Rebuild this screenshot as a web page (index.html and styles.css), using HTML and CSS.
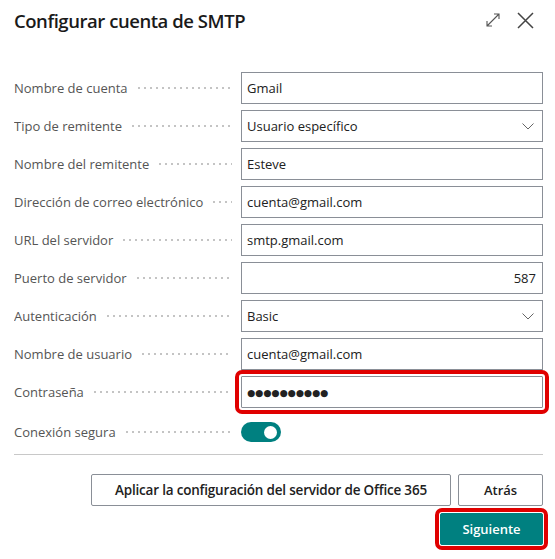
FILE: index.html
```html
<!DOCTYPE html>
<html lang="es">
<head>
<meta charset="utf-8">
<link rel="stylesheet" href="styles.css">
</head>
<body>
<div class="dialog">
  <header class="head">
    <h1 class="title">Configurar cuenta de SMTP</h1>
    <div class="head-icons">
      <svg class="icon" width="16" height="16" viewBox="0 0 16 16"><path d="M2 14 L14 2 M9 2 H14 V7 M2 9 V14 H7" fill="none" stroke="#555" stroke-width="1.1"/></svg>
      <svg class="icon close" width="17" height="17" viewBox="0 0 17 17"><path d="M1 1 L16 16 M16 1 L1 16" fill="none" stroke="#444" stroke-width="1.5"/></svg>
    </div>
  </header>

  <div class="form">
    <div class="row"><span class="label">Nombre de cuenta</span><div class="field">Gmail</div></div>
    <div class="row"><span class="label">Tipo de remitente</span><div class="field select">Usuario específico<svg class="chev" width="12" height="7" viewBox="0 0 12 7"><path d="M0.5 0.5 L6 6 L11.5 0.5" fill="none" stroke="#666" stroke-width="1"/></svg></div></div>
    <div class="row"><span class="label">Nombre del remitente</span><div class="field">Esteve</div></div>
    <div class="row"><span class="label">Dirección de correo electrónico</span><div class="field">cuenta@gmail.com</div></div>
    <div class="row"><span class="label">URL del servidor</span><div class="field">smtp.gmail.com</div></div>
    <div class="row"><span class="label">Puerto de servidor</span><div class="field num">587</div></div>
    <div class="row"><span class="label">Autenticación</span><div class="field select">Basic<svg class="chev" width="12" height="7" viewBox="0 0 12 7"><path d="M0.5 0.5 L6 6 L11.5 0.5" fill="none" stroke="#666" stroke-width="1"/></svg></div></div>
    <div class="row"><span class="label">Nombre de usuario</span><div class="field">cuenta@gmail.com</div></div>
    <div class="row"><span class="label">Contraseña</span><div class="field pw highlight">●●●●●●●●●●</div></div>
    <div class="row toggle-row"><span class="label">Conexión segura</span><div class="toggle"><span class="knob"></span></div></div>
  </div>

  <div class="divider"></div>

  <div class="actions">
    <div class="btn-line">
      <button class="btn apply">Aplicar la configuración del servidor de Office 365</button>
      <button class="btn back">Atrás</button>
    </div>
    <div class="btn-line">
      <button class="btn primary highlight">Siguiente</button>
    </div>
  </div>
</div>
</body>
</html>
```
FILE: styles.css
```css
* { box-sizing: border-box; }
html, body { margin: 0; background: #fff; }
body { font-family: "Open Sans", "Noto Sans", sans-serif; color: #212121; }

.dialog { width: 555px; height: 559px; padding: 0 12px 0 14px; }

.head { display: flex; align-items: center; justify-content: space-between; height: 38px; padding-top: 2px; }
.title { margin: 0; font-size: 18.5px; font-weight: 600; color: #1a1a1a; letter-spacing: -0.45px; }
.head-icons { display: flex; align-items: center; gap: 16px; padding-right: 9px; }
.icon { display: block; }

.form { display: flex; flex-direction: column; gap: 6px; margin-top: 34px; }
.row { display: grid; grid-template-columns: 227px 302px; height: 32px; align-items: center; }
.label { display: flex; align-items: center; font-size: 13px; color: #555; white-space: nowrap; overflow: hidden; padding-right: 9px; }
.label::after { content: ""; flex: 1; height: 2px; margin-left: 8px; background-image: radial-gradient(circle, #c4c4c4 0.8px, transparent 1px); background-size: 6px 2px; background-repeat: repeat-x; }

.field { height: 32px; border: 1px solid #8a8f97; padding: 0 6px 0 5px; display: flex; align-items: center; font-size: 13px; color: #212121; }
.select { justify-content: space-between; padding-right: 8px; }
.num { justify-content: flex-end; }
.pw { font-family: "DejaVu Sans", sans-serif; font-size: 9.3px; letter-spacing: 0; color: #222; }
.highlight { outline: 4px solid #e00000; outline-offset: 2px; border-radius: 1px; }

.toggle-row { margin-top: 2px; }
.toggle { width: 40px; height: 20px; border-radius: 10px; background: #008080; display: flex; align-items: center; justify-content: flex-end; padding-right: 4px; }
.knob { width: 13px; height: 13px; border-radius: 50%; background: #fff; }

.divider { height: 1px; background: #c8c8c8; margin: 6px 0 0; width: 529px; }

.actions { display: flex; flex-direction: column; align-items: flex-end; gap: 7px; margin-top: 19px; width: 529px; }
.btn-line { display: flex; gap: 7px; }
.btn { height: 32px; border: 1px solid #8a8f97; background: #fff; font-family: inherit; font-size: 13px; font-weight: 600; color: #212121; padding: 0; border-radius: 2px; white-space: nowrap; }
.apply { width: 360px; font-size: 13.5px; letter-spacing: -0.2px; }
.back { width: 85px; }
.primary { width: 103px; background: #008080; color: #fff; border-color: #008080; outline-offset: 1px; }
```
